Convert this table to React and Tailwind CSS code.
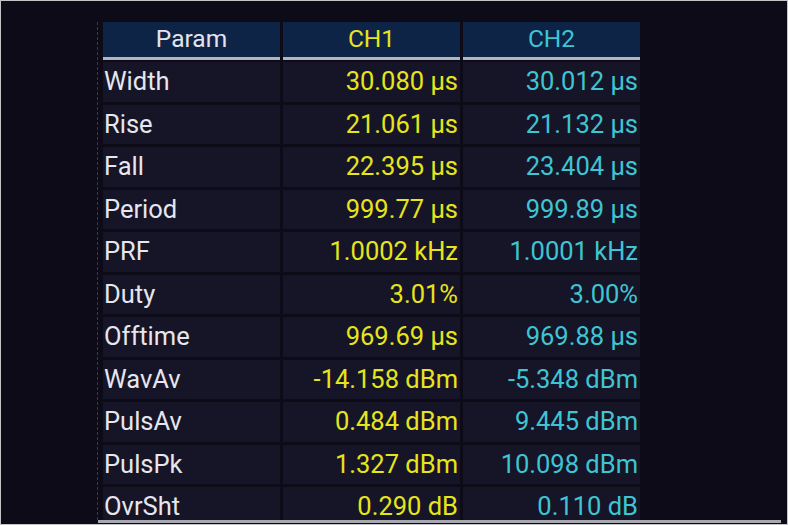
import React from "react";

const rows = [
  ["Width", "30.080 µs", "30.012 µs"],
  ["Rise", "21.061 µs", "21.132 µs"],
  ["Fall", "22.395 µs", "23.404 µs"],
  ["Period", "999.77 µs", "999.89 µs"],
  ["PRF", "1.0002 kHz", "1.0001 kHz"],
  ["Duty", "3.01%", "3.00%"],
  ["Offtime", "969.69 µs", "969.88 µs"],
  ["WavAv", "-14.158 dBm", "-5.348 dBm"],
  ["PulsAv", "0.484 dBm", "9.445 dBm"],
  ["PulsPk", "1.327 dBm", "10.098 dBm"],
  ["OvrSht", "0.290 dB", "0.110 dB"],
];

export default function App() {
  return (
    <div
      className="w-[788px] h-[525px] border border-[#c4c4c8] bg-[#0c0b17] flex flex-col overflow-hidden"
      style={{ fontFamily: "Roboto, 'Noto Sans', sans-serif" }}
    >
      <div className="flex-1 overflow-hidden pl-[96px] pt-[21px] flex">
        <div className="border-l border-dashed border-[#3a3a48] pl-[5px] h-full">
          <div className="grid grid-cols-[177px_177px_177px] gap-x-[3px]">
            <div className="h-[35px] bg-[#0d2447] flex items-center justify-center text-[24.5px] leading-none text-[#e4e4ec]">Param</div>
            <div className="h-[35px] bg-[#0d2447] flex items-center justify-center text-[24.5px] leading-none text-[#e6e51c]">CH1</div>
            <div className="h-[35px] bg-[#0d2447] flex items-center justify-center text-[24.5px] leading-none text-[#3fc4d4]">CH2</div>
            <div className="h-[3px] bg-[#b4b4bc]"></div>
            <div className="h-[3px] bg-[#b4b4bc]"></div>
            <div className="h-[3px] bg-[#b4b4bc]"></div>
          </div>
          <div className="mt-[2px] grid grid-cols-[177px_177px_177px] gap-x-[3px] gap-y-[3px] auto-rows-[39.5px]">
            {rows.map((r) => (
              <React.Fragment key={r[0]}>
                <div className="bg-[#151527] flex items-center pl-[1px] text-[25.5px] text-[#e6e6ee] leading-none whitespace-nowrap">{r[0]}</div>
                <div className="bg-[#151527] flex items-center justify-end pr-[2px] text-[25.5px] text-[#e6e51c] leading-none whitespace-nowrap">{r[1]}</div>
                <div className="bg-[#151527] flex items-center justify-end pr-[2px] text-[25.5px] text-[#3fc4d4] leading-none whitespace-nowrap">{r[2]}</div>
              </React.Fragment>
            ))}
          </div>
        </div>
      </div>
      <div className="h-[3px] ml-[97px] mr-[6px] bg-[#a8a8b0] shrink-0"></div>
      <div className="h-[1px] shrink-0"></div>
    </div>
  );
}
